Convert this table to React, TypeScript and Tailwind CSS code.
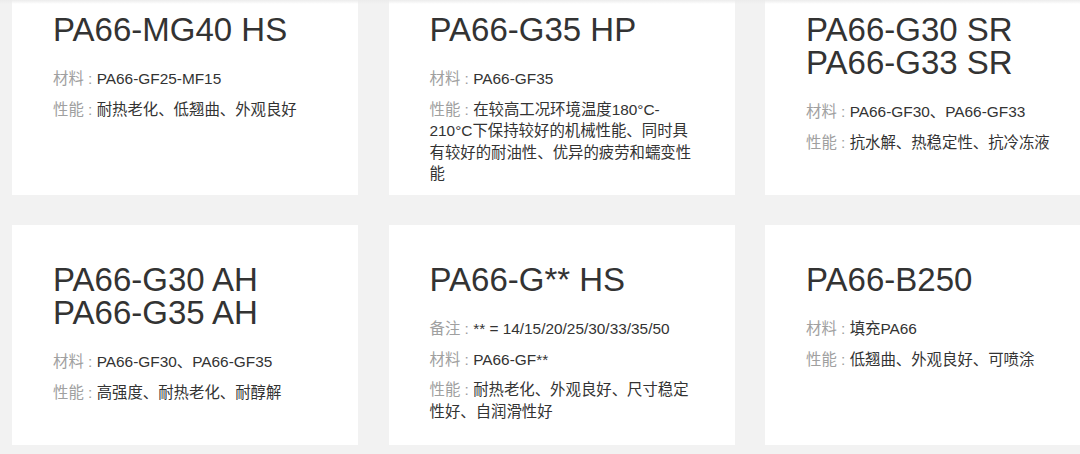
interface Spec {
  label: string;
  value: string;
}

interface Product {
  titles: string[];
  specs: Spec[];
}

const products: Product[] = [
  {
    titles: ["PA66-MG40 HS"],
    specs: [
      { label: "材料", value: "PA66-GF25-MF15" },
      { label: "性能", value: "耐热老化、低翘曲、外观良好" },
    ],
  },
  {
    titles: ["PA66-G35 HP"],
    specs: [
      { label: "材料", value: "PA66-GF35" },
      {
        label: "性能",
        value: "在较高工况环境温度180°C-210°C下保持较好的机械性能、同时具有较好的耐油性、优异的疲劳和蠕变性能",
      },
    ],
  },
  {
    titles: ["PA66-G30 SR", "PA66-G33 SR"],
    specs: [
      { label: "材料", value: "PA66-GF30、PA66-GF33" },
      { label: "性能", value: "抗水解、热稳定性、抗冷冻液" },
    ],
  },
  {
    titles: ["PA66-G30 AH", "PA66-G35 AH"],
    specs: [
      { label: "材料", value: "PA66-GF30、PA66-GF35" },
      { label: "性能", value: "高强度、耐热老化、耐醇解" },
    ],
  },
  {
    titles: ["PA66-G** HS"],
    specs: [
      { label: "备注", value: "** = 14/15/20/25/30/33/35/50" },
      { label: "材料", value: "PA66-GF**" },
      { label: "性能", value: "耐热老化、外观良好、尺寸稳定性好、自润滑性好" },
    ],
  },
  {
    titles: ["PA66-B250"],
    specs: [
      { label: "材料", value: "填充PA66" },
      { label: "性能", value: "低翘曲、外观良好、可喷涂" },
    ],
  },
];

function ProductCard({ product }: { product: Product }) {
  return (
    <div className="h-[220px] bg-white px-[41px] pt-[38px]">
      {/* Title */}
      <h3 className="text-[33px] leading-[33px] font-normal text-[#333]">
        {product.titles.map((t) => (
          <div key={t}>{t}</div>
        ))}
      </h3>

      {/* Specs */}
      <div className="mt-[22px] flex flex-col gap-[9px]">
        {product.specs.map((s) => (
          <p key={s.label} className="text-[15.4px] leading-[21.5px] text-[#333]">
            <span className="text-[#a0a0a0]">{s.label} :</span> {s.value}
          </p>
        ))}
      </div>
    </div>
  );
}

export default function App() {
  return (
    <div
      className="relative h-[454px] w-[1080px] overflow-hidden bg-[#f2f2f2]"
      style={{ fontFamily: '"Liberation Sans", Arial, "Noto Sans CJK SC", sans-serif' }}
    >
      <div className="mt-[-25px] grid grid-cols-[346px_346px_346px] gap-x-[30.5px] gap-y-[30px] pl-[12px]">
        {products.map((p) => (
          <ProductCard key={p.titles[0]} product={p} />
        ))}
      </div>

      {/* header shadow at the top edge */}
      <div className="pointer-events-none absolute inset-x-0 top-0 h-[4px] bg-gradient-to-b from-[#ececec] to-transparent" />
    </div>
  );
}
